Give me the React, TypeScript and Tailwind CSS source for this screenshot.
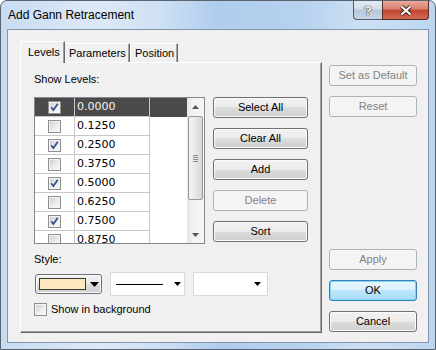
import React from "react";

type BtnKind = "normal" | "disabled" | "focus";

const levels = [
  { v: "0.0000", on: true },
  { v: "0.1250", on: false },
  { v: "0.2500", on: true },
  { v: "0.3750", on: false },
  { v: "0.5000", on: true },
  { v: "0.6250", on: false },
  { v: "0.7500", on: true },
  { v: "0.8750", on: false },
];

const Btn = ({ label, kind = "normal" }: { label: string; kind?: BtnKind }) => {
  const styles: Record<BtnKind, string> = {
    normal:
      "border-[#707070] bg-[linear-gradient(#f2f2f2_0%,#ebebeb_50%,#dddddd_50%,#cfcfcf_100%)] text-black shadow-[inset_0_0_0_1px_#fbfbfb]",
    disabled: "border-[#adb2b5] bg-[#f4f4f4] text-[#838383]",
    focus:
      "border-[#3c7fb1] bg-[linear-gradient(#e8f6fd_0%,#d9f0fc_50%,#bee6fd_50%,#a9dbf6_100%)] text-black shadow-[inset_0_0_0_1px_#7ed6f8]",
  };
  return (
    <div className={`flex h-[21px] w-full items-center justify-center rounded-[3px] border text-[11px] leading-none ${styles[kind]}`}>
      {label}
    </div>
  );
};

const Check = ({ on }: { on: boolean }) => (
  <span className="flex h-[13px] w-[13px] items-center justify-center border border-[#8e8f8f] bg-[#f4f4f4] p-[1px]">
    <span className="flex h-full w-full items-center justify-center bg-[linear-gradient(135deg,#cdd0d5_0%,#eeeeee_60%,#f8f8f8_100%)]">
      {on && (
        <svg width="9" height="9" viewBox="0 0 9 9">
          <path d="M1.2 4.3 L3.4 7 L7.8 0.8" stroke="#304f8c" strokeWidth="1.7" fill="none" />
        </svg>
      )}
    </span>
  </span>
);

const Arrow = ({ w = 9, h = 5 }: { w?: number; h?: number }) => (
  <svg width={w} height={h} viewBox={`0 0 ${w} ${h}`}>
    <path d={`M0 0 L${w} 0 L${w / 2} ${h} Z`} fill="#000" />
  </svg>
);

const ScrollBar = () => (
  <div className="flex h-full w-[17px] flex-col bg-[linear-gradient(90deg,#e6e6e6_0%,#f3f3f3_40%,#f5f5f5_100%)]">
    <div className="flex h-[17px] items-center justify-center">
      <svg width="7" height="4" viewBox="0 0 7 4">
        <path d="M0 4 L7 4 L3.5 0 Z" fill="#555" />
      </svg>
    </div>
    <div className="mx-[1px] mt-[1px] flex h-[84px] items-center justify-center rounded-[2px] border border-[#979797] bg-[linear-gradient(90deg,#f4f4f4_0%,#e8e8e8_50%,#d6d6d6_100%)]">
      <div className="flex w-[5px] flex-col gap-[1px]">
        <div className="h-px bg-[#8a8a8a]" />
        <div className="h-px bg-[#8a8a8a]" />
        <div className="h-px bg-[#8a8a8a]" />
        <div className="h-px bg-[#8a8a8a]" />
      </div>
    </div>
    <div className="flex-1" />
    <div className="flex h-[17px] items-center justify-center">
      <svg width="7" height="4" viewBox="0 0 7 4">
        <path d="M0 0 L7 0 L3.5 4 Z" fill="#555" />
      </svg>
    </div>
  </div>
);

export default function App() {
  return (
    <div className="flex h-[350px] w-[436px] flex-col overflow-hidden rounded-t-[7px] border border-[#5a6470] bg-[linear-gradient(90deg,#c8dcf1_0%,#dde9f7_22%,#cfe1f4_36%,#b0cded_50%,#b5d1ee_68%,#cce0f4_84%,#bdd6f0_100%)] font-['Liberation_Sans',Arial,sans-serif] text-black">
      {/* title bar */}
      <div className="flex h-[28px] shrink-0">
        <div className="flex-1 pl-[7px] pt-[6px] text-[12px] leading-[16px]">Add Gann Retracement</div>
        <div className="mr-[6px] flex h-[19px]">
          <div className="flex w-[29px] items-center justify-center rounded-bl-[4px] border border-r-0 border-t-0 border-[#505c6c] bg-[linear-gradient(#e3ebf4_0%,#d2dde9_45%,#b8c8da_50%,#c7d5e4_100%)]">
            <span className="text-[13px] font-bold leading-none text-white [text-shadow:0_0_1px_#333,0_0_1px_#333,0_0_1px_#333]">?</span>
          </div>
          <div className="flex w-[47px] items-center justify-center rounded-br-[4px] border border-t-0 border-[#5b2a25] bg-[linear-gradient(#e8a89a_0%,#d98070_45%,#c44530_50%,#d06a52_100%)]">
            <svg width="14" height="11" viewBox="0 0 14 11">
              <path d="M2.5 1.5 L11.5 9.5 M11.5 1.5 L2.5 9.5" stroke="#3d2420" strokeWidth="4" />
              <path d="M2.5 1.5 L11.5 9.5 M11.5 1.5 L2.5 9.5" stroke="#fff" strokeWidth="2" />
            </svg>
          </div>
        </div>
      </div>

      {/* client area */}
      <div className="mx-[6px] mb-[6px] flex flex-1 border border-[#8395aa] bg-[#f0f0f0] pl-[12px] pr-[11px] text-[11px]">
        {/* tab control */}
        <div className="flex w-[302px] flex-col pt-[11px]">
          <div className="flex h-[21px] items-end">
            <div className="relative z-10 -mb-px flex h-[22px] w-[45px] items-start border-l border-t border-r border-l-white border-t-white border-r-[#696969] bg-[#f0f0f0] pl-[7px] pt-[4px] leading-[13px] shadow-[inset_-1px_0_0_#a0a0a0]">
              Levels
            </div>
            <div className="flex h-[19px] w-[65px] items-start border-t border-r border-t-white border-r-[#696969] pl-[4px] pt-[3px] leading-[13px] shadow-[inset_-1px_0_0_#a0a0a0]">
              Parameters
            </div>
            <div className="flex h-[19px] w-[48px] items-start border-l border-t border-r border-l-white border-t-white border-r-[#696969] pl-[4px] pt-[3px] leading-[13px] shadow-[inset_-1px_0_0_#a0a0a0]">
              Position
            </div>
          </div>
          <div className="flex h-[271px] flex-col border border-l-white border-t-white border-r-[#696969] border-b-[#696969] pl-[13px] pt-[10px] shadow-[inset_-1px_-1px_0_#a0a0a0]">
            <div className="leading-[13px]">Show Levels:</div>
            <div className="mt-[11px] flex gap-[8px]">
              {/* levels list */}
              <div className="flex h-[147px] w-[171px] border border-[#828790] bg-white">
                <div className="flex flex-1 flex-col overflow-hidden">
                  {levels.map((l, i) => (
                    <div key={l.v} className={`flex h-[19px] shrink-0 ${i === 0 ? "bg-[#4a4a4a] text-[#f4f4f4]" : "text-black"}`}>
                      <div className="flex w-[40px] items-center justify-center border-b border-r border-[#c8c8c8]">
                        <Check on={l.on} />
                      </div>
                      <div className="flex w-[75px] items-center border-b border-r border-[#c8c8c8] pl-[2px] font-['DejaVu_Sans',Verdana,sans-serif] text-[11px]">
                        {l.v}
                      </div>
                    </div>
                  ))}
                </div>
                <ScrollBar />
              </div>
              {/* list buttons */}
              <div className="flex w-[95px] flex-col gap-[10px]">
                <Btn label="Select All" />
                <Btn label="Clear All" />
                <Btn label="Add" />
                <Btn label="Delete" kind="disabled" />
                <Btn label="Sort" />
              </div>
            </div>
            <div className="mt-[9px] leading-[13px]">Style:</div>
            <div className="mt-[6px] flex h-[24px] items-center gap-[8px] pl-px">
              <div className="flex h-[20px] w-[67px] items-center rounded-[3px] border border-[#707070] bg-[linear-gradient(#f2f2f2_0%,#ebebeb_50%,#dddddd_50%,#cfcfcf_100%)] pl-[3px] shadow-[inset_0_0_0_1px_#fbfbfb]">
                <div className="h-[12px] w-[47px] border border-[#3a3a3a] bg-[#fde8bf]" />
                <div className="ml-[4px] flex items-center">
                  <Arrow w={9} h={5} />
                </div>
              </div>
              <div className="flex h-[24px] w-[75px] items-center border border-[#dadada] bg-white pl-[5px]">
                <div className="h-px w-[47px] bg-black" />
                <div className="ml-[11px] flex">
                  <Arrow w={7} h={4} />
                </div>
              </div>
              <div className="flex h-[24px] w-[75px] items-center justify-end border border-[#dadada] bg-white pr-[6px]">
                <Arrow w={7} h={4} />
              </div>
            </div>
            <div className="mt-[7px] flex h-[13px] items-center gap-[4px]">
              <Check on={false} />
              <span className="leading-[13px]">Show in background</span>
            </div>
          </div>
        </div>

        {/* right buttons */}
        <div className="ml-[7px] flex w-[88px] flex-col pb-[10px] pt-[35px]">
          <div className="flex flex-col gap-[10px]">
            <Btn label="Set as Default" kind="disabled" />
            <Btn label="Reset" kind="disabled" />
          </div>
          <div className="flex-1" />
          <div className="flex flex-col gap-[10px]">
            <Btn label="Apply" kind="disabled" />
            <Btn label="OK" kind="focus" />
            <Btn label="Cancel" />
          </div>
        </div>
      </div>
    </div>
  );
}
